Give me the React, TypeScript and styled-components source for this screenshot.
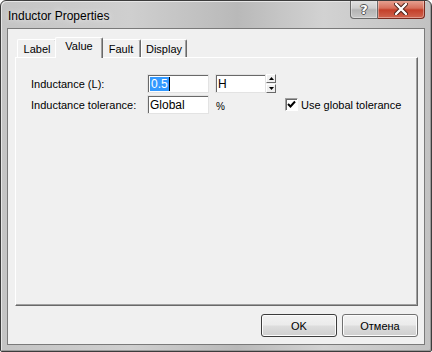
import React, { useState } from 'react'
import styled, { createGlobalStyle } from 'styled-components'

const GlobalStyle = createGlobalStyle`
    html, body {
        margin: 0;
        padding: 0;
        background: #ffffff;
    }
    body {
        font-family: "Liberation Sans", Arial, sans-serif;
        font-size: 11px;
        color: #000;
    }
`;

const Window = styled.div`
    width: 432px;
    height: 352px;
    box-sizing: border-box;
    display: flex;
    flex-direction: column;
    border: 1px solid #3c3c3c;
    border-radius: 6px 6px 2px 2px;
    background: linear-gradient(90deg, #c4c4c4 0%, #cfcfcf 30%, #b9b9b9 55%, #d2d2d2 75%, #c2c2c2 100%);
    box-shadow: inset 1px 1px 0 #e6e6e6, inset -1px -1px 0 #9a9a9a;
    padding: 0 6px 6px 6px;
    overflow: hidden;
`;

const TitleBar = styled.div`
    height: 27px;
    display: flex;
    align-items: flex-start;
    justify-content: space-between;
`;

const Title = styled.span`
    font-family: "Liberation Sans", Arial, sans-serif;
    font-size: 12px;
    margin: 8px 0 0 1px;
    color: #000;
    text-shadow: 0 0 6px rgba(255,255,255,0.9);
`;

const Caption = styled.div`
    display: flex;
    margin-top: -1px;
`;

const CaptionButton = styled.div<{ $close?: boolean }>`
    width: ${p => (p.$close ? '47px' : '28px')};
    height: 19px;
    box-sizing: border-box;
    display: flex;
    align-items: center;
    justify-content: center;
    border: 1px solid ${p => (p.$close ? '#7a2a1e' : '#6a6a6a')};
    border-top: none;
    border-left: ${p => (p.$close ? 'none' : '1px solid #6a6a6a')};
    border-radius: ${p => (p.$close ? '0 0 4px 0' : '0 0 0 4px')};
    background: ${p =>
        p.$close
            ? 'linear-gradient(180deg, #e8a696 0%, #d7705c 45%, #c4402a 55%, #d0654f 100%)'
            : 'linear-gradient(180deg, #e4e4e4 0%, #cdcdcd 45%, #b4b4b4 55%, #c8c8c8 100%)'};
    box-shadow: inset 0 0 0 1px rgba(255,255,255,0.35);
`;

const HelpGlyph = styled.span`
    font-family: "DejaVu Sans", sans-serif;
    font-weight: bold;
    font-size: 13px;
    color: #fff;
    text-shadow: 1px 0 0 #555, -1px 0 0 #555, 0 1px 0 #555, 0 -1px 0 #555;
    line-height: 1;
`;

const Client = styled.div`
    flex: 1;
    display: flex;
    flex-direction: column;
    background: #f0f0f0;
    border: 1px solid #7a7a7a;
    padding: 8px 6px 7px 7px;
`;

const TabStrip = styled.div`
    display: flex;
    align-items: flex-end;
    height: 21px;
    padding-left: 2px;
    position: relative;
    z-index: 1;
`;

const Tab = styled.div<{ $active?: boolean; $w: number }>`
    width: ${p => p.$w}px;
    height: ${p => (p.$active ? '21px' : '18px')};
    box-sizing: border-box;
    margin: ${p => (p.$active ? '0 -2px 0 -2px' : '0 0 1px 0')};
    display: flex;
    align-items: ${p => (p.$active ? 'flex-start' : 'center')};
    padding-top: ${p => (p.$active ? '2px' : '0')};
    justify-content: center;
    background: #f0f0f0;
    border-top: 1px solid #ffffff;
    border-left: 1px solid #ffffff;
    border-right: 1px solid #696969;
    box-shadow: inset -1px 0 0 #a0a0a0;
    border-radius: 2px 2px 0 0;
    ${p => (p.$active ? 'z-index: 2; border-bottom: none;' : '')}
`;

const Panel = styled.div`
    flex: 1;
    margin-top: -1px;
    background: #f0f0f0;
    border-top: 1px solid #ffffff;
    border-left: 1px solid #ffffff;
    border-right: 1px solid #696969;
    border-bottom: 1px solid #696969;
    box-shadow: inset -1px -1px 0 #a0a0a0;
    padding: 16px 0 0 15px;
`;

const Form = styled.div`
    display: grid;
    grid-template-columns: 110px 62px 61px auto;
    column-gap: 6px;
    row-gap: 2px;
    align-items: center;
`;

const FieldLabel = styled.span`
    white-space: nowrap;
`;

const TextBox = styled.div<{ $w: number }>`
    width: ${p => p.$w}px;
    height: 19px;
    box-sizing: border-box;
    background: #fff;
    border-top: 1px solid #a0a0a0;
    border-left: 1px solid #a0a0a0;
    border-right: 1px solid #ffffff;
    border-bottom: 1px solid #ffffff;
    box-shadow: inset 1px 1px 0 #696969;
    outline: 1px solid #e3e3e3;
    outline-offset: -1px;
    display: flex;
    align-items: center;
    padding-left: 2px;
    font-size: 12px;
`;

const Selected = styled.span`
    background: #3399ff;
    color: #fff;
    padding: 0 1px;
    border-right: 1px solid #000;
`;

const UnitCell = styled.div`
    display: flex;
    align-items: center;
`;

const Spin = styled.div`
    width: 10px;
    height: 19px;
    display: flex;
    flex-direction: column;
    justify-content: space-between;
`;

const SpinArrow = styled.div`
    height: 9px;
    box-sizing: border-box;
    background: #f0f0f0;
    border-top: 1px solid #fff;
    border-left: 1px solid #fff;
    border-right: 1px solid #696969;
    border-bottom: 1px solid #696969;
    display: flex;
    align-items: center;
    justify-content: center;
`;

const Percent = styled.span`
    font-size: 10px;
    padding-left: 1px;
    padding-top: 4px;
`;

const CheckRow = styled.label`
    display: flex;
    align-items: center;
    gap: 3px;
    margin-left: 3px;
`;

const CheckBox = styled.div`
    width: 13px;
    height: 13px;
    box-sizing: border-box;
    background: #fff;
    border-top: 1px solid #a0a0a0;
    border-left: 1px solid #a0a0a0;
    border-right: 1px solid #fff;
    border-bottom: 1px solid #fff;
    box-shadow: inset 1px 1px 0 #696969;
    display: flex;
    align-items: center;
    justify-content: center;
`;

const Footer = styled.div`
    display: flex;
    justify-content: flex-end;
    gap: 5px;
    padding-top: 8px;
`;

const Button = styled.button<{ $default?: boolean }>`
    width: 76px;
    height: 23px;
    font-family: "Liberation Sans", Arial, sans-serif;
    font-size: 11px;
    color: #000;
    border: 1px solid ${p => (p.$default ? '#3c3c3c' : '#707070')};
    border-radius: 3px;
    background: linear-gradient(180deg, #f2f2f2 0%, #ebebeb 48%, #dddddd 52%, #cfcfcf 100%);
    box-shadow: inset 0 0 0 1px #fcfcfc;
    padding: 0;
`;

const Arrow: React.FC<{ up?: boolean }> = ({ up }) => (
    <svg width="5" height="3" viewBox="0 0 5 3">
        <polygon points={up ? '2.5,0 5,3 0,3' : '0,0 5,0 2.5,3'} fill="#000" />
    </svg>
);

const tabs = [
    { name: 'Label', w: 40 },
    { name: 'Value', w: 48 },
    { name: 'Fault', w: 40 },
    { name: 'Display', w: 46 },
];

export default function App() {
    const [active] = useState<string>('Value')
    const [useGlobal, setUseGlobal] = useState<boolean>(true)
    return (
        <Window>
            <GlobalStyle />
            <TitleBar>
                <Title>Inductor Properties</Title>
                <Caption>
                    <CaptionButton>
                        <HelpGlyph>?</HelpGlyph>
                    </CaptionButton>
                    <CaptionButton $close>
                        <svg width="14" height="12" viewBox="0 0 14 12">
                            <path d="M2 1 L12 11 M12 1 L2 11" stroke="#4a2018" strokeWidth="4.2" strokeLinecap="round" />
                            <path d="M2 1 L12 11 M12 1 L2 11" stroke="#ffffff" strokeWidth="2.4" strokeLinecap="round" />
                        </svg>
                    </CaptionButton>
                </Caption>
            </TitleBar>
            <Client>
                <TabStrip>
                    {tabs.map(t => (
                        <Tab key={t.name} $w={t.w} $active={t.name === active}>{t.name}</Tab>
                    ))}
                </TabStrip>
                <Panel>
                    <Form>
                        <FieldLabel>Inductance (L):</FieldLabel>
                        <TextBox $w={62}><Selected>0.5</Selected></TextBox>
                        <UnitCell>
                            <TextBox $w={51}>H</TextBox>
                            <Spin>
                                <SpinArrow><Arrow up /></SpinArrow>
                                <SpinArrow><Arrow /></SpinArrow>
                            </Spin>
                        </UnitCell>
                        <span />
                        <FieldLabel>Inductance tolerance:</FieldLabel>
                        <TextBox $w={62}>Global</TextBox>
                        <Percent>%</Percent>
                        <CheckRow onClick={() => setUseGlobal(!useGlobal)}>
                            <CheckBox>
                                {useGlobal && (
                                    <svg width="9" height="9" viewBox="0 0 9 9">
                                        <path d="M1 4 L3.5 6.5 L8 1.5" stroke="#000" strokeWidth="2" fill="none" />
                                    </svg>
                                )}
                            </CheckBox>
                            Use global tolerance
                        </CheckRow>
                    </Form>
                </Panel>
                <Footer>
                    <Button $default>OK</Button>
                    <Button>Отмена</Button>
                </Footer>
            </Client>
        </Window>
    )
}
